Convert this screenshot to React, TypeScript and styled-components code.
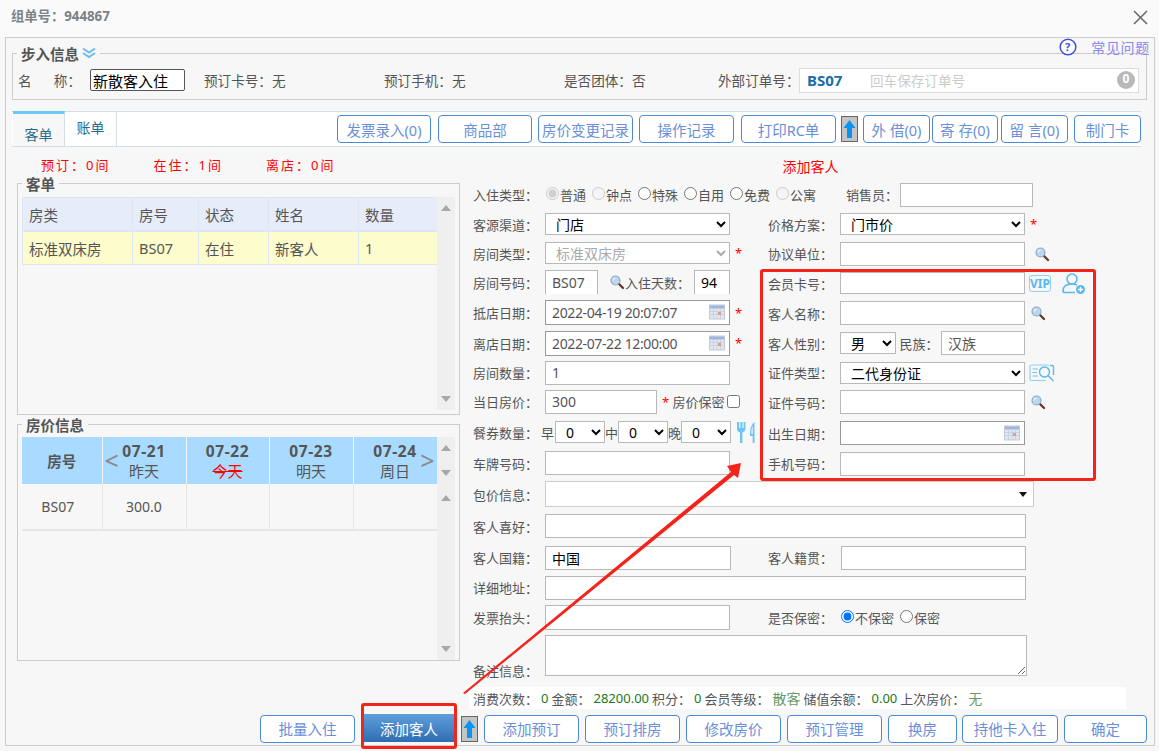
import React from 'react';
import styled, { createGlobalStyle } from 'styled-components';

const GlobalStyle = createGlobalStyle`
    html, body {
        margin: 0;
        padding: 0;
        background: #f7f7f7;
    }
    body, input, select, textarea, button {
        font-family: "Noto Sans", "Noto Sans CJK SC", sans-serif;
    }
`;

const Page = styled.div`
    position: relative;
    width: 1159px;
    height: 751px;
    overflow: hidden;
    background: #f7f7f7;
    font-size: 13px;
    color: #555;
`;

const TitleBar = styled.div`
    display: flex;
    align-items: center;
    justify-content: space-between;
    height: 37px;
    padding: 0 11px 7px 11px;
    box-sizing: border-box;
    background: #fafafa;
    color: #7d8288;
    font-size: 13.3px;
    font-weight: 700;
`;

const CloseSlot = styled.span`
    display: flex;
    margin-top: 4px;
`;

const Main = styled.div`
    position: relative;
    display: flex;
    flex-direction: column;
    margin: 0 4px 0 5px;
    height: 709px;
    box-sizing: border-box;
    border: 1px solid #ccc;
    padding: 6px 7px 2px 6px;
`;

const Help = styled.div`
    position: absolute;
    top: 0;
    right: 4px;
    display: flex;
    align-items: center;
    gap: 14px;
    color: #8a8aee;
    font-size: 14px;
    letter-spacing: 0.7px;
    line-height: 17px;
`;

const Group = styled.fieldset<{ $h: number }>`
    margin: 0;
    min-width: 0;
    height: ${(p) => p.$h}px;
    box-sizing: border-box;
    padding: 0 4px;
    border: 1px solid #ccc;
`;

const Legend = styled.legend`
    display: flex;
    align-items: center;
    gap: 3px;
    margin-left: 0;
    padding: 0 4px;
    height: 18px;
    font-size: 14.5px;
    font-weight: 700;
    color: #555;
`;

const InfoRow = styled.div`
    display: flex;
    align-items: center;
    height: 26px;
    margin-top: 5px;
    padding-left: 1px;
    font-size: 13.6px;
    white-space: nowrap;
`;

const InfoItem = styled.span<{ $w: number }>`
    width: ${(p) => p.$w}px;
    flex: none;
`;

const NameLabel = styled.span`
    display: flex;
    justify-content: space-between;
    width: 63px;
    margin-right: 9px;
`;

const NameInput = styled.input`
    width: 95px;
    height: 22px;
    margin-right: 19px;
    box-sizing: border-box;
    padding: 0 2px;
    border: 1px solid #555;
    border-radius: 2px;
    font-size: 15px;
    color: #000;
    background: #fff;
`;

const OrderBox = styled.div`
    display: flex;
    align-items: center;
    width: 340px;
    height: 25px;
    box-sizing: border-box;
    padding: 0 3px 0 7px;
    border: 1px solid #ddd;
    background: #fff;
`;

const OrderRoom = styled.b`
    width: 63px;
    font-size: 15px;
    color: #1a6ea8;
`;

const OrderHint = styled.span`
    flex: 1;
    color: #ccc;
`;

const OrderCount = styled.span`
    width: 18px;
    height: 18px;
    border-radius: 50%;
    background: #b9b9b9;
    color: #fff;
    font-size: 12px;
    font-weight: 700;
    line-height: 16px;
    text-align: center;
`;

const TabStrip = styled.div`
    display: flex;
    align-items: center;
    height: 36px;
    margin: 11px 6px 0 0;
    box-sizing: border-box;
    border-top: 1px solid #d5dde5;
    border-bottom: 1px solid #d5dde5;
    background: #fff;
`;

const Tab = styled.div<{ $active?: boolean }>`
    align-self: stretch;
    width: 52px;
    margin-left: ${(p) => (p.$active ? 1 : 0)}px;
    margin-top: ${(p) => (p.$active ? -1 : 0)}px;
    box-sizing: border-box;
    border-top: ${(p) => (p.$active ? '3px solid #66ccf5' : 'none')};
    border-right: 1px solid #d5dde5;
    background: ${(p) => (p.$active ? '#f7f7f7' : '#fff')};
    color: #2a6a8a;
    font-size: 14px;
    line-height: ${(p) => (p.$active ? 41 : 32)}px;
    text-align: center;
`;

const TabButtons = styled.div`
    display: flex;
    align-items: center;
    margin-left: auto;
`;

const Btn = styled.button<{ $w: number; $ml: number }>`
    width: ${(p) => p.$w}px;
    height: 28px;
    margin-left: ${(p) => p.$ml}px;
    flex: none;
    padding: 0;
    border: 1px solid #4a8ad8;
    border-radius: 4px;
    background: #fff;
    color: #6a8fd8;
    font-size: 14.5px;
`;

const PrimaryBtn = styled(Btn)`
    height: 28px;
    border: none;
    border-radius: 0;
    background: linear-gradient(#5f9fdc, #2f6db2);
    color: #fff;
    align-self: flex-start;
`;

const UpBox = styled.div<{ $ml: number }>`
    display: flex;
    align-items: center;
    justify-content: center;
    width: 17px;
    height: 26px;
    margin-left: ${(p) => p.$ml}px;
    flex: none;
    box-sizing: border-box;
    border: 1px solid #666;
    background: #c4c4c4;
`;

const Summary = styled.div`
    display: flex;
    height: 27px;
    padding: 9px 0 0 29px;
    box-sizing: border-box;
    color: #f00;
    line-height: 18px;
`;

const SummaryItem = styled.span`
    width: 112.5px;
    letter-spacing: 2px;
`;

const SummaryAdd = styled.span`
    margin: 2px 0 0 404px;
    font-size: 14px;
`;

const Body = styled.div`
    display: flex;
    height: 535px;
`;

const LeftCol = styled.div`
    display: flex;
    flex-direction: column;
    width: 443px;
    margin-left: 5px;
    flex: none;
`;

const TableWrap = styled.div<{ $h: number; $mt: number }>`
    display: flex;
    height: ${(p) => p.$h}px;
    margin-top: ${(p) => p.$mt}px;
`;

const TableArea = styled.div`
    width: 415px;
    flex: none;
`;

const Grid = styled.table`
    width: 415px;
    table-layout: fixed;
    border-collapse: collapse;
    font-size: 14.5px;
`;

const GuestHead = styled.th`
    height: 32px;
    padding: 0 0 0 6px;
    border: 1px solid #dfe6f1;
    border-bottom-width: 2px;
    background: #e6edf9;
    font-weight: 400;
    text-align: left;
`;

const GuestCell = styled.td`
    height: 32px;
    padding: 0 0 0 6px;
    border: 1px solid #dfe6f1;
    background: #fcfccc;
`;

const PriceHead = styled.th`
    position: relative;
    height: 47px;
    padding: 0;
    border-right: 1px solid #f4f4f4;
    background: #a9daff;
    font-weight: 400;
    line-height: 20px;
    text-align: center;
`;

const PriceDate = styled.b`
    display: block;
    font-size: 15.5px;
    letter-spacing: 0.6px;
`;

const PriceDay = styled.span<{ $today?: boolean }>`
    font-size: 15px;
    color: ${(p) => (p.$today ? '#f00' : '#555')};
    text-decoration: ${(p) => (p.$today ? 'line-through' : 'none')};
`;

const PriceRoom = styled.b`
    font-size: 14.5px;
`;

const PriceCell = styled.td<{ $left?: boolean }>`
    height: 45px;
    padding: 0 ${(p) => (p.$left ? 8 : 0)}px 0 0;
    border-right: 1px solid #e6e6e6;
    border-bottom: 2px solid #e6e6e6;
    font-size: 14px;
    text-align: center;
`;

const Pager = styled.span<{ $side: 'left' | 'right' }>`
    position: absolute;
    top: 11px;
    ${(p) => p.$side}: 2px;
    color: #888;
    font-size: 25px;
    line-height: 24px;
`;

const Scrollbar = styled.div`
    display: flex;
    flex-direction: column;
    align-items: center;
    justify-content: space-between;
    width: 21px;
    padding: 8px 0;
    box-sizing: border-box;
    background: #efefef;
`;

const ScrollGroup = styled.div`
    display: flex;
    flex-direction: column;
    align-items: center;
    gap: 19px;
`;

const Tri = styled.i<{ $up?: boolean }>`
    display: block;
    width: 0;
    height: 0;
    border-left: 5px solid transparent;
    border-right: 5px solid transparent;
    border-${(p) => (p.$up ? 'bottom' : 'top')}: 6px solid #a8a8a8;
`;

const FormCol = styled.div`
    flex: 1;
    min-width: 0;
    margin-left: 13px;
    padding-top: 6px;
`;

const FormTop = styled.div`
    display: flex;
`;

const FormHalf = styled.div<{ $w: number }>`
    width: ${(p) => p.$w}px;
    flex: none;
`;

const Row = styled.div<{ $h: number; $end?: boolean }>`
    display: flex;
    align-items: ${(p) => (p.$end ? 'flex-end' : 'center')};
    height: ${(p) => p.$h}px;
    white-space: nowrap;
`;

const Label = styled.span<{ $w?: number }>`
    width: ${(p) => p.$w ?? 72}px;
    flex: none;
`;

const Text = styled.span<{ $w?: number }>`
    width: ${(p) => (p.$w ? `${p.$w}px` : 'auto')};
    flex: none;
`;

const Field = styled.input<{ $w: number; $h?: number; $dark?: boolean; $clip?: boolean }>`
    width: ${(p) => p.$w}px;
    height: ${(p) => p.$h ?? 24}px;
    flex: none;
    box-sizing: border-box;
    padding: 0 6px;
    border: 1px solid ${(p) => (p.$dark ? '#999' : '#b8b8b8')};
    border-bottom: ${(p) => (p.$clip ? 'none' : undefined)};
    background: #fff;
    color: #555;
    font-size: 14px;
    letter-spacing: ${(p) => (p.$dark ? '-0.37px' : '0')};
    outline: none;
`;

const BlackField = styled(Field)`
    color: #000;
`;

const DateBox = styled.div<{ $w: number }>`
    position: relative;
    width: ${(p) => p.$w}px;
    flex: none;
`;

const DateIcon = styled.span`
    position: absolute;
    right: 5px;
    top: 4px;
    display: flex;
`;

const Pick = styled.select<{ $w: number; $dim?: boolean }>`
    width: ${(p) => p.$w}px;
    height: 22px;
    flex: none;
    box-sizing: border-box;
    padding: 0 0 0 6px;
    border: 1px solid #b8b8b8;
    border-radius: 0;
    background-color: #fff;
    color: ${(p) => (p.$dim ? '#aaa' : '#000')};
    font-size: 14px;
    opacity: 1;
`;

const Star = styled.span<{ $mx?: number }>`
    margin-left: ${(p) => p.$mx ?? 5}px;
    color: #f00;
    font-size: 13px;
`;

const Option = styled.label`
    display: inline-flex;
    align-items: center;
    margin-right: 5px;
`;

const Radio = styled.input`
    width: 13px;
    height: 13px;
    margin: 0 1px 2px 1px;
    accent-color: #0075ff;
`;

const Check = styled.input`
    width: 13px;
    height: 13px;
    margin: 0;
`;

const Combo = styled.div`
    position: relative;
    width: 489px;
    height: 26px;
    box-sizing: border-box;
    border: 1px solid #ccc;
    background: #fff;
`;

const ComboArrow = styled.i`
    position: absolute;
    right: 6px;
    top: 10px;
    border-left: 4px solid transparent;
    border-right: 4px solid transparent;
    border-top: 5px solid #111;
`;

const Memo = styled.textarea`
    width: 482px;
    height: 41px;
    margin-bottom: 4px;
    box-sizing: border-box;
    border: 1px solid #b8b8b8;
    background: #fff;
`;

const StatLine = styled.div`
    display: flex;
    align-items: center;
    gap: 3px;
    width: 657px;
    height: 22px;
    margin: 7px 0 0 -4px;
    padding-left: 4px;
    box-sizing: border-box;
    background: #fff;
    white-space: nowrap;
`;

const Stat = styled.span`
    color: #1a7a1a;
`;

const Level = styled.span`
    color: #6a9a6a;
    font-size: 14px;
`;

const Footer = styled.div`
    display: flex;
    justify-content: flex-end;
    align-items: center;
    height: 29px;
    margin-top: 5px;
`;

const RedBox = styled.div<{ $l: number; $t: number; $w: number; $h: number }>`
    position: absolute;
    left: ${(p) => p.$l}px;
    top: ${(p) => p.$t}px;
    width: ${(p) => p.$w}px;
    height: ${(p) => p.$h}px;
    box-sizing: border-box;
    border: 3px solid #f4241a;
    border-radius: 3px;
    pointer-events: none;
`;

const ArrowLayer = styled.svg`
    position: absolute;
    left: 0;
    top: 0;
    pointer-events: none;
`;

const VipBadge = styled.span`
    width: 26px;
    height: 17px;
    margin-left: 4px;
    box-sizing: border-box;
    border: 1px solid #8fd0f5;
    border-radius: 3px;
    color: #5bb7ee;
    font-size: 12px;
    font-weight: 700;
    line-height: 15px;
    text-align: center;
`;

const IconSlot = styled.span<{ $ml: number }>`
    display: flex;
    margin-left: ${(p) => p.$ml}px;
    flex: none;
`;

const Lens = () => (
    <svg width="16" height="16" viewBox="0 0 16 16">
        <path d="M9.5 9.5L14 14" stroke="#6b3a2a" strokeWidth="2.4" strokeLinecap="round" />
        <circle cx="6.5" cy="6.5" r="4.5" fill="#bcd6ee" stroke="#8aa9c8" strokeWidth="1.2" />
        <path d="M4 6.5a2.6 2.6 0 0 1 2.4-2.4" stroke="#fff" strokeWidth="1" fill="none" />
    </svg>
);

const Calendar = () => (
    <svg width="16" height="16" viewBox="0 0 16 16">
        <rect x="0.5" y="1" width="15" height="14" fill="#dfe6f2" stroke="#c3cad6" />
        <rect x="1" y="1.5" width="14" height="3" fill="#9db6dc" />
        <path d="M1 7.5h14M1 10.5h14M4.5 5v10M8 5v10M11.5 5v10" stroke="#bfcbe0" strokeWidth="0.7" />
        <rect x="9" y="8" width="3" height="3" fill="#e0a080" />
    </svg>
);

const UpArrow = () => (
    <svg width="13" height="20" viewBox="0 0 13 20">
        <path d="M6.5 1L12.5 9H9V19H4V9H0.5Z" fill="#0a94f2" />
    </svg>
);

const Close = () => (
    <svg width="15" height="15" viewBox="0 0 15 15">
        <path d="M1 1L14 14M14 1L1 14" stroke="#666" strokeWidth="1.5" />
    </svg>
);

const HelpIcon = () => (
    <svg width="18" height="18" viewBox="0 0 18 18">
        <circle cx="9" cy="9" r="7.8" fill="#fff" stroke="#3c50d8" strokeWidth="1.5" />
        <text x="9" y="13" textAnchor="middle" fontSize="11" fontWeight="700" fill="#3c50d8">?</text>
    </svg>
);

const DoubleChevron = () => (
    <svg width="14" height="12" viewBox="0 0 14 12">
        <path d="M1 1.5L7 5.5L13 1.5M1 6L7 10L13 6" stroke="#6cbcef" strokeWidth="2" fill="none" />
    </svg>
);

const Cutlery = () => (
    <svg width="21" height="23" viewBox="0 0 21 23">
        <path d="M2 1v7c0 2 1.4 3 3 3.4V22h2.4V11.4C9 11 10.400 10 10.400 8V1H8.600v6H7.400V1H5.400v6H4.200V1Z" fill="#6cc5f5" />
        <path d="M19.500 1v21h-1.800v-7h-2.700c-.4-5 .6-11 4.500-14Zm-1.800 4c-1.200 2-1.400 5-1.300 8h1.300Z" fill="#6cc5f5" />
    </svg>
);

const UserPlus = () => (
    <svg width="24" height="23" viewBox="0 0 24 23">
        <circle cx="10" cy="7" r="5" fill="none" stroke="#5bb7ee" strokeWidth="1.6" />
        <path d="M1 19c0-5 4-7 9-7 2 0 3.500.3 5 1M1 19c0 .8.500 1.500 2 1.500h10" fill="none" stroke="#5bb7ee" strokeWidth="1.6" />
        <circle cx="18.500" cy="17.500" r="4.500" fill="#5bb7ee" />
        <path d="M16 17.500h5M18.500 15v5" stroke="#fff" strokeWidth="1.300" />
    </svg>
);

const IdSearch = () => (
    <svg width="26" height="18" viewBox="0 0 26 18">
        <path d="M20 1H2.500Q1 1 1 2.500V15Q1 16.500 2.500 16.500H17" fill="none" stroke="#8fd0f5" strokeWidth="1.200" />
        <path d="M3.500 5H9M3.500 8.500H8M3.500 12H9" stroke="#6cc5f5" strokeWidth="1.200" />
        <circle cx="15.500" cy="8" r="5" fill="none" stroke="#5bb7ee" strokeWidth="1.400" />
        <path d="M19 11.500L24.500 17M21 1.500h2Q24.500 1.500 24.500 3V11" fill="none" stroke="#5bb7ee" strokeWidth="1.400" />
    </svg>
);

const topButtons: [string, number, number][] = [
    ['发票录入(0)', 94, 0],
    ['商品部', 94, 7],
    ['房价变更记录', 95, 6],
    ['操作记录', 95, 6],
    ['打印RC单', 95, 7],
];

const sideButtons: [string, number, number][] = [
    ['外 借(0)', 67, 5],
    ['寄 存(0)', 66, 2],
    ['留 言(0)', 67, 3],
    ['制门卡', 67, 6],
];

const footerButtons: [string, number, number][] = [
    ['添加预订', 95, 6],
    ['预订排房', 95, 6],
    ['修改房价', 95, 6],
    ['预订管理', 95, 6],
    ['换房', 69, 6],
    ['持他卡入住', 96, 5],
    ['确定', 83, 6],
];

const guestCols = [110, 66, 70, 90, 79];
const guestHeads = ['房类', '房号', '状态', '姓名', '数量'];
const guestRow = ['标准双床房', 'BS07', '在住', '新客人', '1'];
const priceCols = [80, 84, 83, 84, 84];

const priceDays = [
    { date: '07-21', day: '昨天' },
    { date: '07-22', day: '今天', today: true },
    { date: '07-23', day: '明天' },
    { date: '07-24', day: '周日' },
];

const stayTypes = [
    { text: '普通', checked: true, disabled: true },
    { text: '钟点', disabled: true },
    { text: '特殊' },
    { text: '自用' },
    { text: '免费' },
    { text: '公寓', disabled: true },
];

const App = () => (
    <Page>
        <GlobalStyle />
        <TitleBar>
            <span>组单号：944867</span>
            <CloseSlot>
                <Close />
            </CloseSlot>
        </TitleBar>
        <Main>
            <Help>
                <HelpIcon />
                <span>常见问题</span>
            </Help>
            <Group $h={57}>
                <Legend>
                    步入信息 <DoubleChevron />
                </Legend>
                <InfoRow>
                    <NameLabel>
                        <span>名</span>
                        <span>称：</span>
                    </NameLabel>
                    <NameInput readOnly defaultValue="新散客入住" />
                    <InfoItem $w={180}>预订卡号：无</InfoItem>
                    <InfoItem $w={180}>预订手机：无</InfoItem>
                    <InfoItem $w={154}>是否团体：否</InfoItem>
                    <InfoItem $w={81}>外部订单号：</InfoItem>
                    <OrderBox>
                        <OrderRoom>BS07</OrderRoom>
                        <OrderHint>回车保存订单号</OrderHint>
                        <OrderCount>0</OrderCount>
                    </OrderBox>
                </InfoRow>
            </Group>
            <TabStrip>
                <Tab $active>客单</Tab>
                <Tab>账单</Tab>
                <TabButtons>
                    {topButtons.map(([text, w, ml]) => (
                        <Btn key={text} $w={w} $ml={ml}>
                            {text}
                        </Btn>
                    ))}
                    <UpBox $ml={5}>
                        <UpArrow />
                    </UpBox>
                    {sideButtons.map(([text, w, ml]) => (
                        <Btn key={text} $w={w} $ml={ml}>
                            {text}
                        </Btn>
                    ))}
                </TabButtons>
            </TabStrip>
            <Summary>
                <SummaryItem>预订：0间</SummaryItem>
                <SummaryItem>在住：1间</SummaryItem>
                <SummaryItem>离店：0间</SummaryItem>
                <SummaryAdd>添加客人</SummaryAdd>
            </Summary>
            <Body>
                <LeftCol>
                    <Group $h={241}>
                        <Legend>客单</Legend>
                        <TableWrap $h={213} $mt={5}>
                            <TableArea>
                                <Grid>
                                    <colgroup>
                                        {guestCols.map((w, i) => (
                                            <col key={i} width={w} />
                                        ))}
                                    </colgroup>
                                    <thead>
                                        <tr>
                                            {guestHeads.map((h) => (
                                                <GuestHead key={h}>{h}</GuestHead>
                                            ))}
                                        </tr>
                                    </thead>
                                    <tbody>
                                        <tr>
                                            {guestRow.map((c) => (
                                                <GuestCell key={c}>{c}</GuestCell>
                                            ))}
                                        </tr>
                                    </tbody>
                                </Grid>
                            </TableArea>
                            <Scrollbar>
                                <Tri $up />
                                <Tri />
                            </Scrollbar>
                        </TableWrap>
                    </Group>
                    <Group $h={246}>
                        <Legend>房价信息</Legend>
                        <TableWrap $h={223} $mt={4}>
                            <TableArea>
                                <Grid>
                                    <colgroup>
                                        {priceCols.map((w, i) => (
                                            <col key={i} width={w} />
                                        ))}
                                    </colgroup>
                                    <thead>
                                        <tr>
                                            <PriceHead>
                                                <PriceRoom>房号</PriceRoom>
                                            </PriceHead>
                                            {priceDays.map((d, i) => (
                                                <PriceHead key={d.date}>
                                                    {i === 0 && <Pager $side="left">&lt;</Pager>}
                                                    <PriceDate>{d.date}</PriceDate>
                                                    <PriceDay $today={d.today}>{d.day}</PriceDay>
                                                    {i === 3 && <Pager $side="right">&gt;</Pager>}
                                                </PriceHead>
                                            ))}
                                        </tr>
                                    </thead>
                                    <tbody>
                                        <tr>
                                            <PriceCell $left>BS07</PriceCell>
                                            <PriceCell>300.0</PriceCell>
                                            <PriceCell />
                                            <PriceCell />
                                            <PriceCell />
                                        </tr>
                                    </tbody>
                                </Grid>
                            </TableArea>
                            <Scrollbar>
                                <ScrollGroup>
                                    <Tri $up />
                                    <Tri />
                                    <Tri $up />
                                </ScrollGroup>
                                <Tri />
                            </Scrollbar>
                        </TableWrap>
                    </Group>
                </LeftCol>
                <FormCol>
                    <FormTop>
                        <FormHalf $w={295}>
                            <Row $h={29}>
                                <Label>入住类型：</Label>
                                {stayTypes.map((t) => (
                                    <Option key={t.text}>
                                        <Radio
                                            type="radio"
                                            name="stay"
                                            disabled={t.disabled}
                                            defaultChecked={t.checked}
                                        />
                                        {t.text}
                                    </Option>
                                ))}
                            </Row>
                            <Row $h={30}>
                                <Label>客源渠道：</Label>
                                <Pick $w={185}>
                                    <option>门店</option>
                                </Pick>
                            </Row>
                            <Row $h={28}>
                                <Label>房间类型：</Label>
                                <Pick $w={185} $dim disabled>
                                    <option>标准双床房</option>
                                </Pick>
                                <Star>*</Star>
                            </Row>
                            <Row $h={30}>
                                <Label>房间号码：</Label>
                                <Field $w={53} $clip readOnly defaultValue="BS07" />
                                <IconSlot $ml={11}>
                                    <Lens />
                                </IconSlot>
                                <Text $w={69}>入住天数：</Text>
                                <BlackField $w={36} $clip readOnly defaultValue="94" />
                            </Row>
                            <Row $h={31}>
                                <Label>抵店日期：</Label>
                                <DateBox $w={185}>
                                    <Field $w={185} $h={25} $dark readOnly defaultValue="2022-04-19 20:07:07" />
                                    <DateIcon>
                                        <Calendar />
                                    </DateIcon>
                                </DateBox>
                                <Star>*</Star>
                            </Row>
                            <Row $h={30}>
                                <Label>离店日期：</Label>
                                <DateBox $w={185}>
                                    <Field $w={185} $h={25} $dark readOnly defaultValue="2022-07-22 12:00:00" />
                                    <DateIcon>
                                        <Calendar />
                                    </DateIcon>
                                </DateBox>
                                <Star>*</Star>
                            </Row>
                            <Row $h={29}>
                                <Label>房间数量：</Label>
                                <Field $w={185} readOnly defaultValue="1" />
                            </Row>
                            <Row $h={29}>
                                <Label>当日房价：</Label>
                                <Field $w={112} readOnly defaultValue="300" />
                                <Star>*</Star>
                                <Text $w={58}>&nbsp;房价保密</Text>
                                <Check type="checkbox" />
                            </Row>
                            <Row $h={32}>
                                <Label $w={68}>餐券数量：</Label>
                                <Text $w={14}>早</Text>
                                <Pick $w={50}>
                                    <option>0</option>
                                </Pick>
                                <Text $w={13}>中</Text>
                                <Pick $w={50}>
                                    <option>0</option>
                                </Pick>
                                <Text $w={13}>晚</Text>
                                <Pick $w={50}>
                                    <option>0</option>
                                </Pick>
                                <IconSlot $ml={4}>
                                    <Cutlery />
                                </IconSlot>
                            </Row>
                            <Row $h={30}>
                                <Label>车牌号码：</Label>
                                <Field $w={185} readOnly />
                            </Row>
                        </FormHalf>
                        <FormHalf $w={290}>
                            <Row $h={29}>
                                <Label $w={78} />
                                <Text $w={54}>销售员：</Text>
                                <Field $w={133} readOnly />
                            </Row>
                            <Row $h={30}>
                                <Label>价格方案：</Label>
                                <Pick $w={185}>
                                    <option>门市价</option>
                                </Pick>
                                <Star>*</Star>
                            </Row>
                            <Row $h={29}>
                                <Label>协议单位：</Label>
                                <Field $w={185} readOnly />
                                <IconSlot $ml={9}>
                                    <Lens />
                                </IconSlot>
                            </Row>
                            <Row $h={30}>
                                <Label>会员卡号：</Label>
                                <Field $w={185} $h={22} readOnly />
                                <VipBadge>VIP</VipBadge>
                                <IconSlot $ml={11}>
                                    <UserPlus />
                                </IconSlot>
                            </Row>
                            <Row $h={30}>
                                <Label>客人名称：</Label>
                                <Field $w={185} readOnly />
                                <IconSlot $ml={5}>
                                    <Lens />
                                </IconSlot>
                            </Row>
                            <Row $h={30}>
                                <Label>客人性别：</Label>
                                <Pick $w={56}>
                                    <option>男</option>
                                </Pick>
                                <Text $w={45}>&nbsp;民族：</Text>
                                <Field $w={84} readOnly defaultValue="汉族" />
                            </Row>
                            <Row $h={29}>
                                <Label>证件类型：</Label>
                                <Pick $w={185}>
                                    <option>二代身份证</option>
                                </Pick>
                                <IconSlot $ml={4}>
                                    <IdSearch />
                                </IconSlot>
                            </Row>
                            <Row $h={30}>
                                <Label>证件号码：</Label>
                                <Field $w={185} readOnly />
                                <IconSlot $ml={5}>
                                    <Lens />
                                </IconSlot>
                            </Row>
                            <Row $h={32}>
                                <Label>出生日期：</Label>
                                <DateBox $w={185}>
                                    <Field $w={185} $dark readOnly />
                                    <DateIcon>
                                        <Calendar />
                                    </DateIcon>
                                </DateBox>
                            </Row>
                            <Row $h={29}>
                                <Label>手机号码：</Label>
                                <Field $w={185} readOnly />
                            </Row>
                        </FormHalf>
                    </FormTop>
                    <Row $h={32}>
                        <Label>包价信息：</Label>
                        <Combo>
                            <ComboArrow />
                        </Combo>
                    </Row>
                    <Row $h={32}>
                        <Label>客人喜好：</Label>
                        <Field $w={481} readOnly />
                    </Row>
                    <Row $h={31}>
                        <Label>客人国籍：</Label>
                        <BlackField $w={186} readOnly defaultValue="中国" />
                        <Text $w={37} />
                        <Label $w={73}>客人籍贯：</Label>
                        <Field $w={185} readOnly />
                    </Row>
                    <Row $h={29}>
                        <Label>详细地址：</Label>
                        <Field $w={481} readOnly />
                    </Row>
                    <Row $h={30}>
                        <Label>发票抬头：</Label>
                        <Field $w={185} $h={25} readOnly />
                        <Text $w={38} />
                        <Label>是否保密：</Label>
                        <Option>
                            <Radio type="radio" name="secret" defaultChecked />
                            不保密
                        </Option>
                        <Option>
                            <Radio type="radio" name="secret" />
                            保密
                        </Option>
                    </Row>
                    <Row $h={48} $end>
                        <Label>备注信息：</Label>
                        <Memo readOnly />
                    </Row>
                    <StatLine>
                        消费次数：<Stat>0</Stat>金额：<Stat>28200.00</Stat>积分：<Stat>0</Stat>会员等级：
                        <Level>散客</Level>储值余额：<Stat>0.00</Stat>上次房价：<Level>无</Level>
                    </StatLine>
                </FormCol>
            </Body>
            <Footer>
                <Btn $w={95} $ml={0}>
                    批量入住
                </Btn>
                <PrimaryBtn $w={90} $ml={9}>
                    添加客人
                </PrimaryBtn>
                <UpBox $ml={7}>
                    <UpArrow />
                </UpBox>
                {footerButtons.map(([text, w, ml]) => (
                    <Btn key={text} $w={w} $ml={ml}>
                        {text}
                    </Btn>
                ))}
            </Footer>
        </Main>
        <RedBox $l={760} $t={269} $w={336} $h={212} />
        <RedBox $l={361} $t={703} $w={96} $h={46} />
        <ArrowLayer width="1159" height="751" viewBox="0 0 1159 751">
            <path
                d="M463 693L731 472L727 466L741 463L738 478L734 475L465 694Z"
                fill="#f4241a"
            />
        </ArrowLayer>
    </Page>
);

export default App;
